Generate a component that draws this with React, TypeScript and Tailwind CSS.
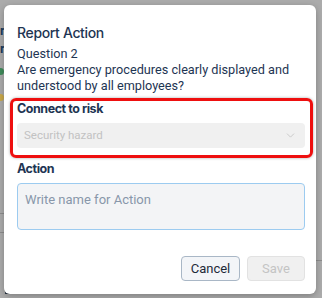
import { ChevronDown } from 'lucide-react';

export default function App() {
  return (
    <div className="relative w-[322px] h-[298px] overflow-hidden bg-[#ababab] font-['Roboto',sans-serif]">
      {/* page peeking out behind the overlay */}
      <div className="absolute left-0 top-[24px] text-[13px] font-bold text-[#1b3a5c] leading-none">r</div>
      <div className="absolute left-0 top-[42px] text-[13px] font-bold text-[#1b3a5c] leading-none">r</div>
      <div className="absolute left-[-3px] top-[68px] w-[7px] h-[7px] rounded-full bg-[#3f8a5a]" />
      <div className="absolute left-[-3px] top-[94px] w-[7px] h-[7px] rounded-full bg-[#c9a84a]" />
      <div className="absolute left-0 top-[213px] w-[6px] h-px bg-[#8c8c8c]" />
      <div className="absolute left-0 top-[232px] w-[6px] h-px bg-[#8c8c8c]" />
      <div className="absolute right-0 top-[260px] w-[6px] h-px bg-[#8c8c8c]" />
      <div className="absolute left-[5px] top-[292px] w-[11px] h-[2px] bg-[#2e3a48]" />

      <div className="relative pl-[4px] pt-[5px]">
        <div className="w-[312px] h-[289px] rounded-[6px] bg-white shadow-[0_2px_6px_rgba(0,0,0,0.25)] flex flex-col pl-[13px] pr-[11px] pt-[18px]">
          <h1 className="text-[14px] leading-[20px] text-[#1e3553] font-['Inter',sans-serif] font-medium tracking-[-0.35px]">
            Report Action
          </h1>
          <p className="mt-[3px] text-[12.7px] leading-[16px] text-[#1e3553]">Question 2</p>
          <p className="text-[12.7px] leading-[16px] text-[#1e3553]">
            Are emergency procedures clearly displayed and understood by all employees?
          </p>

          <div className="mt-[4px] -ml-[7px] -mr-[8px] border-[3px] border-[#ee0f0f] rounded-[6px] pl-[4px] pr-[5px] pb-[7px] shadow-[0_0_3px_rgba(0,0,0,0.35)]">
            <div className="text-[12.5px] leading-[16px] font-bold text-[#1e3553] font-['Inter',sans-serif] tracking-[-0.45px]">
              Connect to risk
            </div>
            <div className="mt-[6px] h-[25px] rounded-[4px] bg-[#f0f0f0] flex items-center justify-between pl-[7px] pr-[8px]">
              <span className="text-[11.5px] text-[#c2c2c2]">Security hazard</span>
              <ChevronDown className="w-[13px] h-[13px] text-[#c2c2c2]" strokeWidth={1.5} />
            </div>
          </div>

          <div className="mt-[3px] text-[12.5px] leading-[16px] font-bold text-[#1e3553] font-['Inter',sans-serif] tracking-[-0.45px]">
            Action
          </div>
          <div className="mt-[6px] h-[47px] w-[288px] rounded-[4px] border border-[#9ccbf0] bg-[#f3f4f6] px-[7px] pt-[3px]">
            <span className="text-[13px] leading-[16px] text-[#8897aa]">Write name for Action</span>
          </div>

          <div className="mt-[26px] flex justify-end gap-[7px]">
            <button className="w-[59px] h-[25px] rounded-[4px] border border-[#a9b7c6] bg-[#f3f5f8] text-[13px] text-[#1e2a38]">
              Cancel
            </button>
            <button className="w-[58px] h-[25px] rounded-[4px] border border-[#e2e2e2] bg-[#f0f0f0] text-[13px] text-[#c4c4c4]">
              Save
            </button>
          </div>
        </div>
      </div>
    </div>
  );
}
